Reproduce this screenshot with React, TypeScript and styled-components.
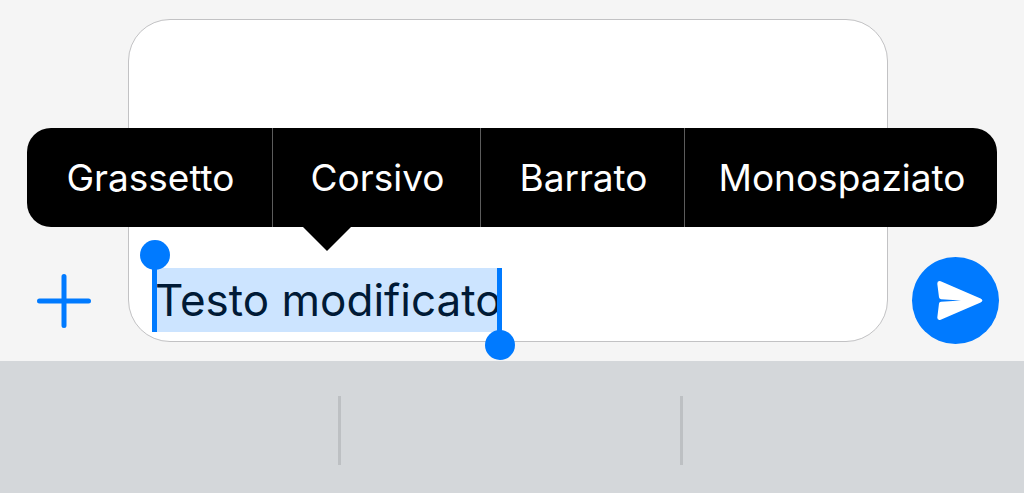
import React from "react";
import styled, { createGlobalStyle } from "styled-components";

const BLUE = "#007aff";

const GlobalStyle = createGlobalStyle`
  * { box-sizing: border-box; }
  body {
    margin: 0;
    background: #f5f5f5;
    font-family: Inter, "Liberation Sans", sans-serif;
  }
  button, input { font: inherit; margin: 0; padding: 0; border: 0; background: none; }
  button { cursor: pointer; }
`;

const Screen = styled.main`
  display: flex;
  flex-direction: column;
  min-height: 100vh;
`;

const Composer = styled.form`
  position: relative;
  display: flex;
  align-items: flex-end;
  gap: 24px;
  padding: 19px 25px 17px 24px;
`;

const RoundButton = styled.button<{ $fill?: string }>`
  display: flex;
  flex: none;
  align-items: center;
  justify-content: center;
  width: ${(p) => (p.$fill ? 87 : 80)}px;
  height: 87px;
  border-radius: 50%;
  background: ${(p) => p.$fill ?? "transparent"};
`;

const Field = styled.div`
  display: flex;
  flex: 1;
  align-items: flex-end;
  min-width: 0;
  min-height: 323px;
  margin-bottom: 2px;
  padding: 0 26px 9px;
  border: 1px solid #c2c2c4;
  border-radius: 42px;
  background: #fff;
`;

const Selection = styled.div`
  position: relative;
  display: flex;
  width: 344px;
  height: 64px;
  background: #cce4ff;
`;

const MessageInput = styled.input`
  width: 100%;
  font-size: 44px;
  line-height: 64px;
  color: #001a36;
  outline: none;
`;

const Handle = styled.span<{ $end?: boolean }>`
  position: absolute;
  z-index: 1;
  top: 0;
  bottom: 0;
  ${(p) => (p.$end ? "right" : "left")}: -3px;
  width: 5px;
  background: ${BLUE};

  &::after {
    content: "";
    position: absolute;
    left: -12px;
    ${(p) => (p.$end ? "bottom" : "top")}: -28px;
    width: 30px;
    height: 30px;
    border-radius: 50%;
    background: ${BLUE};
  }
`;

const FormatMenu = styled.div`
  position: absolute;
  z-index: 2;
  top: 128px;
  left: 27px;
  right: 27px;
  display: grid;
  grid-template-columns: 245fr 208fr 204fr 313fr;
  height: 99px;
  border-radius: 24px;
  background: #000;

  &::after {
    content: "";
    position: absolute;
    top: 98px;
    left: 275px;
    border: 25px solid transparent;
    border-top-color: #000;
    border-bottom: 0;
  }
`;

const FormatButton = styled.button`
  padding-left: 2px;
  font-size: 37px;
  line-height: 48px;
  color: #fff;
  text-align: center;

  & + & { border-left: 1px solid #5c5c5c; }
`;

const Suggestions = styled.div`
  display: grid;
  flex: 1;
  grid-template-columns: repeat(3, 1fr);
  align-items: start;
  min-height: 132px;
  padding-top: 35px;
  background: #d4d7da;
`;

const Suggestion = styled.div`
  height: 69px;

  &:not(:last-child) { border-right: 3px solid #bdc0c3; }
`;

const formats = ["Grassetto", "Corsivo", "Barrato", "Monospaziato"];

export default function App() {
  return (
    <>
      <GlobalStyle />
      <Screen>
        <Composer onSubmit={(e) => e.preventDefault()}>
          <RoundButton type="button" aria-label="Aggiungi">
            <svg width="54" height="54" viewBox="0 0 54 54" aria-hidden="true">
              <path d="M27 2.5v49M2.5 27h49" stroke={BLUE} strokeWidth="5" strokeLinecap="round" />
            </svg>
          </RoundButton>
          <Field>
            <Selection>
              <Handle />
              <MessageInput aria-label="Messaggio" defaultValue="Testo modificato" />
              <Handle $end />
            </Selection>
          </Field>
          <RoundButton type="submit" aria-label="Invia" $fill={BLUE}>
            <svg width="87" height="87" viewBox="0 0 87 87" aria-hidden="true">
              <path
                fill="#fff"
                d="M28.7 24.3 68.6 41.5Q72.2 43.5 68.6 45.5L28.7 62.7Q25.2 63.6 25.3 60.4L27 46.6Q27.2 44.9 29 44.7L49 43.6 29 42.2Q27.2 42 27 40.3L25.3 26.7Q25.2 23.3 28.7 24.3Z"
              />
            </svg>
          </RoundButton>
          <FormatMenu role="toolbar" aria-label="Formato">
            {formats.map((name) => (
              <FormatButton type="button" key={name}>{name}</FormatButton>
            ))}
          </FormatMenu>
        </Composer>
        <Suggestions>
          <Suggestion />
          <Suggestion />
          <Suggestion />
        </Suggestions>
      </Screen>
    </>
  );
}
